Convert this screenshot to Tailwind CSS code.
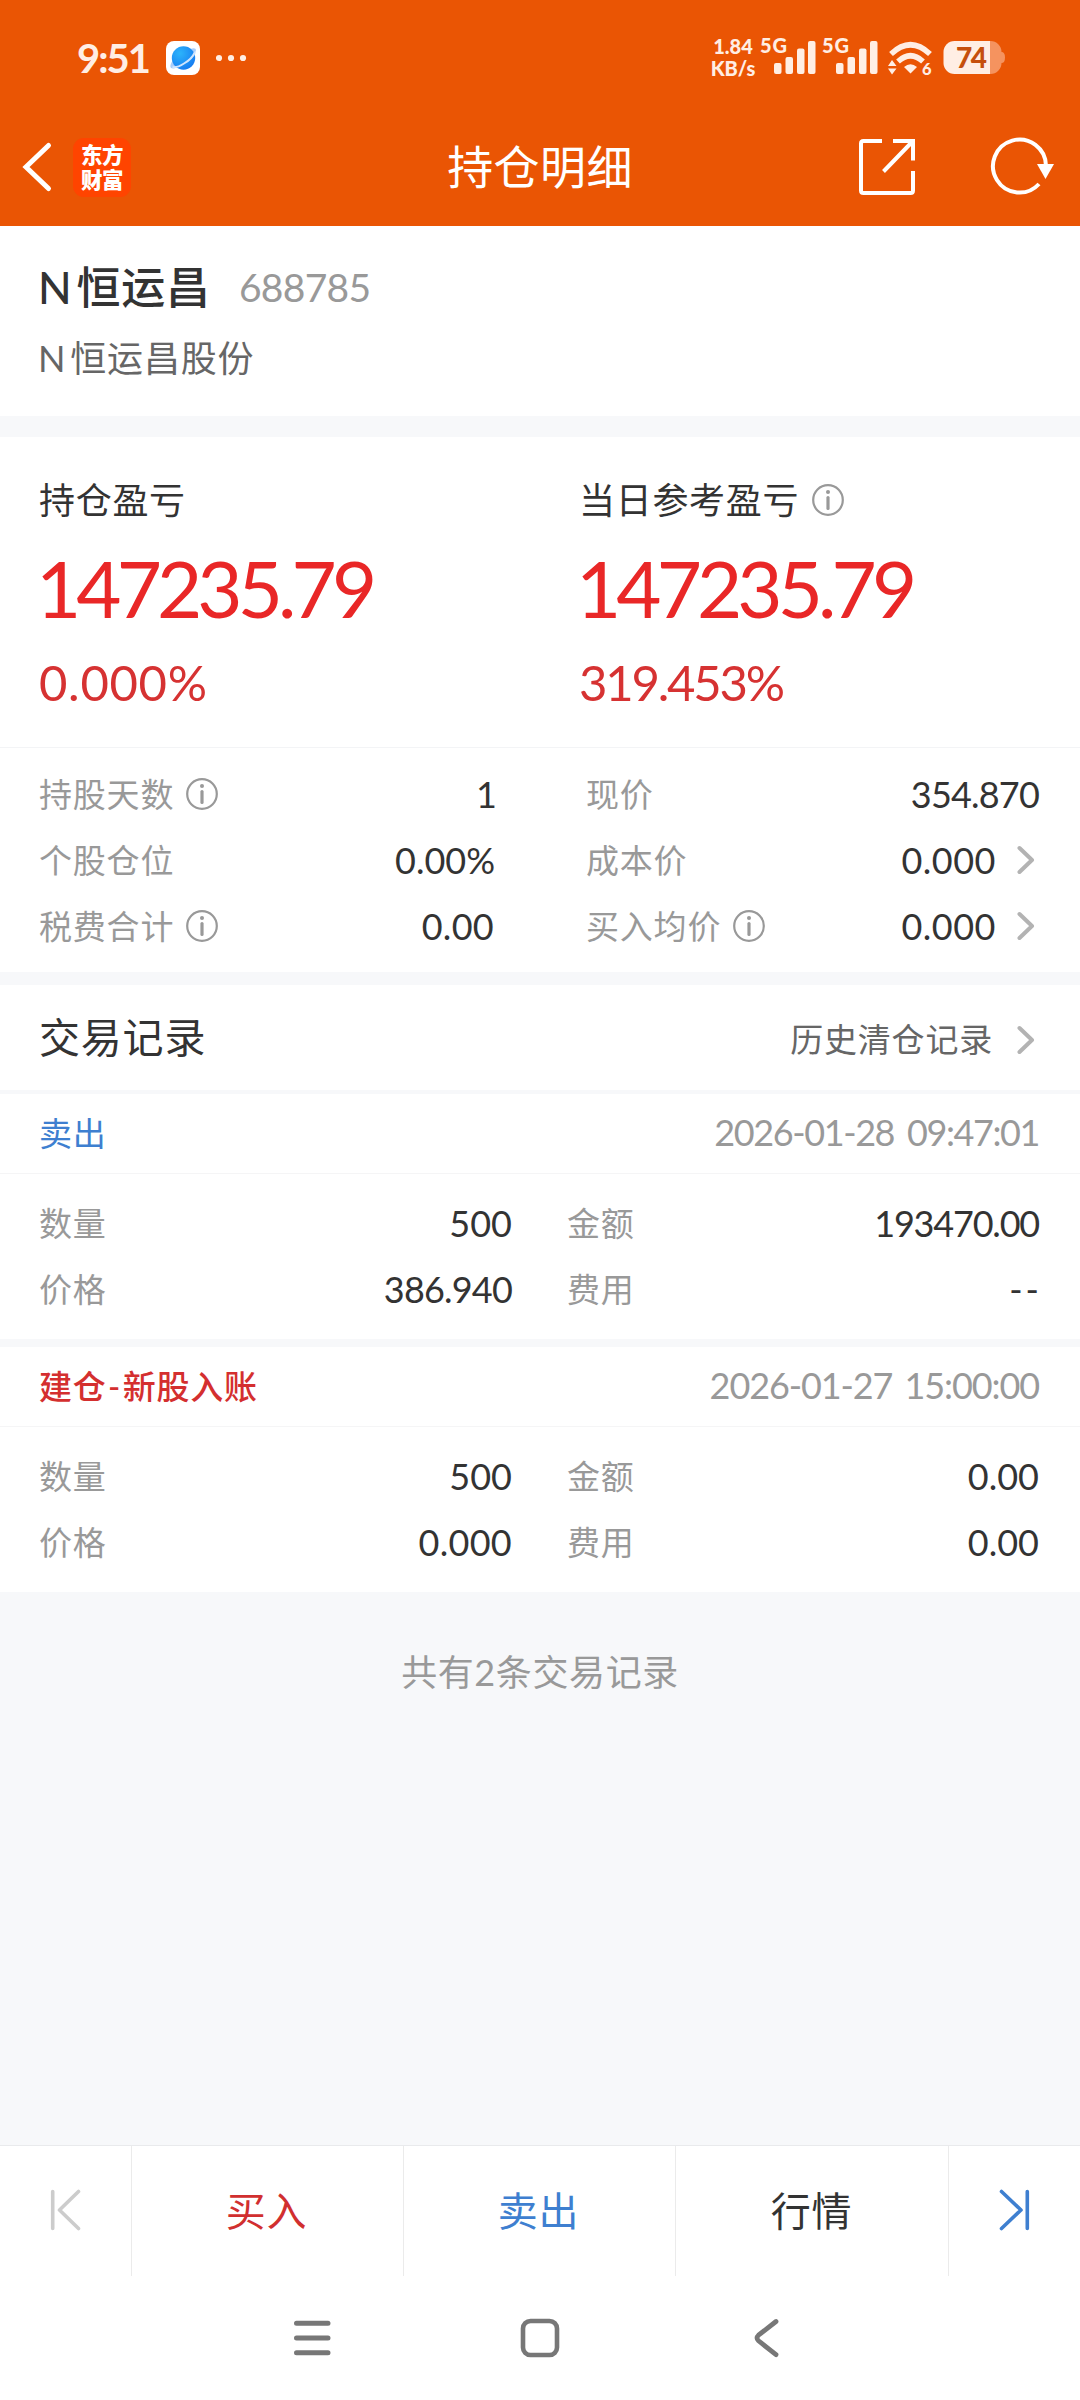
<!DOCTYPE html>
<html lang="zh-CN">
<head>
<meta charset="utf-8">
<title>持仓明细</title>
<script src="https://cdn.jsdelivr.net/npm/@tailwindcss/browser@4"></script>
</head>
<body class="bg-white">
<svg class="hidden">
  <symbol id="info" viewBox="0 0 32 32"><circle cx="16" cy="16" r="14.8" fill="none" stroke="#999" stroke-width="2.2"/><circle cx="16" cy="8" r="2" fill="#999"/><path d="M16 13.500V24.500" stroke="#999" stroke-width="3.200" stroke-linecap="round"/></symbol>
  <symbol id="chev" viewBox="0 0 18 30"><path d="M2.500 3L15 15L2.500 27" fill="none" stroke="#b3b3b3" stroke-width="4" stroke-linecap="round" stroke-linejoin="round"/></symbol>
</svg>
<div class="w-[1080px] h-[2400px] flex flex-col overflow-hidden bg-white text-[#333] leading-none whitespace-nowrap font-['Lato','Noto_Sans_CJK_SC',sans-serif]">

  <header class="h-[226px] shrink-0 bg-[#ea5504] flex flex-col">
    <div class="h-[108px] pt-[34px] pl-[77px] pr-[74px] flex items-start justify-between">
      <div class="h-12 flex items-center text-[#ffeee4]">
        <span class="w-[89px] text-[40px] font-bold tracking-[-2px]">9:51</span>
        <svg class="w-[34px] h-[34px]" viewBox="0 0 34 34">
          <defs><radialGradient id="g" cx=".35" cy=".3" r=".8"><stop offset="0" stop-color="#2cb4fb"/><stop offset="1" stop-color="#1578f0"/></radialGradient></defs>
          <rect width="34" height="34" rx="8" fill="#fff"/>
          <path d="M24 8Q30 6 30 9Q29 16 19 22Q9 29 5 27Q3 25 7 19Z" fill="#a9cdfa"/>
          <circle cx="17.500" cy="17" r="11.700" fill="url(#g)"/>
          <path d="M29 11Q26 18 18 22.500Q11 27 6.500 26" fill="none" stroke="#cfe4fd" stroke-width="2"/>
        </svg>
        <svg class="w-8 h-8 ml-4" viewBox="0 0 32 32" fill="#ffeee4"><circle cx="3" cy="16" r="3.100"/><circle cx="15" cy="16" r="3.100"/><circle cx="27" cy="16" r="3.100"/></svg>
      </div>
      <div class="h-12 flex items-center text-[#ffeee4] font-bold">
        <div class="w-[50px] pr-1 pb-[3px] text-[20px] leading-[22px] text-center font-black">1.84<br>KB/s</div>
        <svg class="w-[62px] h-11 font-black overflow-visible" viewBox="760 36 62 44" fill="#ffeee4"><text x="760" y="53" font-size="20" textLength="27">5G</text><rect x="774" y="63" width="7.500" height="11" rx="2"/><rect x="785.500" y="57" width="7.500" height="17" rx="2"/><rect x="797" y="48.500" width="7.500" height="25.500" rx="2"/><rect x="808" y="41" width="7.500" height="33" rx="2"/></svg>
        <svg class="w-[62px] h-11 font-black overflow-visible" viewBox="760 36 62 44" fill="#ffeee4"><text x="760" y="53" font-size="20" textLength="27">5G</text><rect x="774" y="63" width="7.500" height="11" rx="2"/><rect x="785.500" y="57" width="7.500" height="17" rx="2"/><rect x="797" y="48.500" width="7.500" height="25.500" rx="2"/><rect x="808" y="41" width="7.500" height="33" rx="2"/></svg>
        <svg class="w-[59px] h-10" viewBox="884 38 59 40" fill="none" stroke="#ffeee4">
          <path d="M891 54Q910.500 35.500 930 54" stroke-width="5.500"/>
          <path d="M898 61.500Q910.500 50 923 61.500" stroke-width="5.500"/>
          <path d="M904 67Q910.500 61.500 917 67L910.500 73.500Z" fill="#ffeee4" stroke="none"/>
          <path d="M888 66L892 60L896.500 66ZM888 68.500L892 74.500L896.500 68.500Z" fill="#ffeee4" stroke="none"/>
          <text x="922" y="74.500" font-size="16.500" class="font-black" fill="#ffeee4" stroke="none">6</text>
        </svg>
        <svg class="w-[63px] h-10" viewBox="943 38 63 40">
          <path d="M989 41H990.500A11 11 0 0 1 1001.500 52Q1005 52 1005 57.500Q1005 63 1001.500 63A11 11 0 0 1 990.500 74H989Z" fill="#f5935f"/>
          <path d="M990 41V74H954.500A11 11 0 0 1 943.500 63V52A11 11 0 0 1 954.500 41Z" fill="#ffeee4"/>
          <text x="956" y="68" font-size="28" textLength="31" class="font-black" fill="#c54f0c">74</text>
        </svg>
      </div>
    </div>
    <div class="h-[118px] flex items-center pl-[21px] pr-[24px] text-white">
      <svg class="w-8 h-[52px]" viewBox="0 0 32 52"><path d="M27.500 4.500L5 26L27.500 47.500" fill="none" stroke="#fff" stroke-width="5" stroke-linecap="round"/></svg>
      <div class="ml-[20px] w-[58px] h-[59px] rounded-[11px] bg-[#ff4400] text-[21.500px] leading-[25px] font-black text-center pt-[3px] tracking-[-0.5px] font-['Noto_Sans_CJK_SC',sans-serif]">东方<br>财富</div>
      <h1 class="flex-1 text-center text-[46px] pl-[102px] font-normal tracking-[0.4px]">持仓明细</h1>
      <svg class="w-[60px] h-[60px] mr-[73px] ml-[10px]" viewBox="858 137 60 60" fill="none" stroke="#fff" stroke-width="4"><path d="M883 141H864.500Q862 141 862 143.500V190.500Q862 193 864.500 193H911.500Q914 193 914 190.500V171M894 141H914V160.500M884.500 171.500L913 142"/></svg>
      <svg class="w-[66px] h-[60px]" viewBox="990 137 66 60"><path d="M1046 166A26.500 26.500 0 1 0 1039 184" fill="none" stroke="#fff" stroke-width="4"/><path d="M1037 164H1054L1045.500 179Z" fill="#fff"/></svg>
    </div>
  </header>

  <section class="h-[190px] shrink-0 pl-[38px] pt-[35px]">
    <div class="flex items-center h-[52px]"><span class="text-[44px] font-medium tracking-[0.8px]"><span class="mr-[4px]">N</span>恒运昌</span><span class="ml-[28px] text-[39px] text-[#999] tracking-[-0.7px]">688785</span></div>
    <div class="mt-[25px] h-10 flex items-center text-[36px] text-[#666] tracking-[0.8px]"><span class="mr-[4px]">N</span>恒运昌股份</div>
  </section>
  <div class="h-[21px] shrink-0 bg-[#f7f8fa]"></div>

  <section class="h-[310px] shrink-0 grid grid-cols-2 pt-[43px]">
    <div class="pl-[39px]">
      <div class="h-10 flex items-center text-[36px] tracking-[0.7px]">持仓盈亏</div>
      <div class="mt-[30px] -ml-[3px] h-[76px] flex items-center text-[78px] tracking-[-4.900px] text-[#e92727]">147235.79</div>
      <div class="mt-[31px] h-[50px] flex items-center text-[49px] text-[#d63232] tracking-[0.7px]">0.000%</div>
    </div>
    <div class="pl-[39px]">
      <div class="h-10 flex items-center text-[36px] tracking-[0.7px]">当日参考盈亏<svg class="w-8 h-8 ml-[13px]"><use href="#info"/></svg></div>
      <div class="mt-[30px] -ml-[3px] h-[76px] flex items-center text-[78px] tracking-[-4.900px] text-[#e92727]">147235.79</div>
      <div class="mt-[31px] h-[50px] flex items-center text-[49px] text-[#d63232] tracking-[-2.200px]">319.453%</div>
    </div>
  </section>
  <div class="h-px shrink-0 bg-[#f3f4f6]"></div>

  <section class="h-[224px] shrink-0 py-[13px] pl-[39px] pr-[41px] grid grid-cols-[455px_453px] gap-x-[92px] auto-rows-[66px] text-[36px]">
    <div class="flex items-center"><span class="text-[33px] text-[#999] tracking-[0.8px]">持股天数</span><svg class="w-8 h-8 ml-[12px]"><use href="#info"/></svg><span class="ml-auto -mr-[3px]">1</span></div>
    <div class="flex items-center"><span class="text-[33px] text-[#999] tracking-[0.8px]">现价</span><span class="ml-auto tracking-[-0.8px]">354.870</span></div>
    <div class="flex items-center"><span class="text-[33px] text-[#999] tracking-[0.8px]">个股仓位</span><span class="ml-auto -mr-px">0.00%</span></div>
    <div class="flex items-center"><span class="text-[33px] text-[#999] tracking-[0.8px]">成本价</span><span class="ml-auto tracking-[0.500px]">0.000</span><svg class="w-[18px] h-[30px] ml-[21px] mr-[4px]"><use href="#chev"/></svg></div>
    <div class="flex items-center"><span class="text-[33px] text-[#999] tracking-[0.8px]">税费合计</span><svg class="w-8 h-8 ml-[12px]"><use href="#info"/></svg><span class="ml-auto tracking-[0.300px]">0.00</span></div>
    <div class="flex items-center"><span class="text-[33px] text-[#999] tracking-[0.8px]">买入均价</span><svg class="w-8 h-8 ml-[12px]"><use href="#info"/></svg><span class="ml-auto tracking-[0.500px]">0.000</span><svg class="w-[18px] h-[30px] ml-[21px] mr-[4px]"><use href="#chev"/></svg></div>
  </section>
  <div class="h-[13px] shrink-0 bg-[#f7f8fa]"></div>

  <section class="h-[105px] shrink-0 pl-[39px] pr-[45px] flex items-center">
    <h2 class="text-[41px] tracking-[0.8px] font-normal">交易记录</h2>
    <div class="ml-auto flex items-center text-[33px] text-[#666] tracking-[0.8px] pt-1">历史清仓记录<svg class="w-[18px] h-[30px] ml-[24px]"><use href="#chev"/></svg></div>
  </section>
  <div class="h-1 shrink-0 bg-[#f7f8fa]"></div>

  <section class="h-[245px] shrink-0">
    <div class="h-[80px] border-b border-[#f5f5f6] pl-[39px] pr-[41px] flex items-center justify-between text-[33px]"><span class="text-[#3e7fd0] tracking-[0.8px]">卖出</span><span class="text-[36px] pb-[3px] text-[#999] tracking-[-1.400px] [word-spacing:5px]">2026-01-28 09:47:01</span></div>
    <div class="pt-4 pl-[39px] pr-[41px] grid grid-cols-[473px_472px] gap-x-[55px] auto-rows-[66px] text-[36px]">
      <div class="flex items-center justify-between"><span class="text-[33px] text-[#999] tracking-[0.8px]">数量</span><span>500</span></div>
      <div class="flex items-center justify-between"><span class="text-[33px] text-[#999] tracking-[0.8px]">金额</span><span class="tracking-[-1.200px]">193470.00</span></div>
      <div class="flex items-center justify-between"><span class="text-[33px] text-[#999] tracking-[0.8px]">价格</span><span class="tracking-[-0.800px]">386.940</span></div>
      <div class="flex items-center justify-between"><span class="text-[33px] text-[#999] tracking-[0.8px]">费用</span><span class="tracking-[3px] -mr-[3px]">--</span></div>
    </div>
  </section>
  <div class="h-2 shrink-0 bg-[#f7f8fa]"></div>
  <section class="h-[245px] shrink-0">
    <div class="h-[80px] border-b border-[#f5f5f6] pl-[39px] pr-[41px] flex items-center justify-between text-[33px]"><span class="text-[#d42f2f] tracking-[0.8px] font-medium">建仓<span class="mx-[1.500px]">-</span>新股入账</span><span class="text-[36px] pb-[3px] text-[#999] tracking-[-1.100px] [word-spacing:4px]">2026-01-27 15:00:00</span></div>
    <div class="pt-4 pl-[39px] pr-[41px] grid grid-cols-[473px_472px] gap-x-[55px] auto-rows-[66px] text-[36px]">
      <div class="flex items-center justify-between"><span class="text-[33px] text-[#999] tracking-[0.8px]">数量</span><span>500</span></div>
      <div class="flex items-center justify-between"><span class="text-[33px] text-[#999] tracking-[0.8px]">金额</span><span>0.00</span></div>
      <div class="flex items-center justify-between"><span class="text-[33px] text-[#999] tracking-[0.8px]">价格</span><span class="tracking-[0.300px]">0.000</span></div>
      <div class="flex items-center justify-between"><span class="text-[33px] text-[#999] tracking-[0.8px]">费用</span><span>0.00</span></div>
    </div>
  </section>

  <main class="flex-1 bg-[#f7f8fa] pt-[60px] text-center text-[#999] text-[36px] leading-10 tracking-[0.600px]">共有2条交易记录</main>

  <nav class="h-[131px] shrink-0 border-t border-[#e9eaec] grid grid-cols-[132px_272px_272px_273px_131px] text-[40px] tracking-[0.8px]">
    <div class="border-r border-[#ebebeb] flex items-center"><svg class="w-8 h-[42px] ml-[50px] -mt-[2px]" viewBox="50 2188.500 32 42" fill="none" stroke="#ccc" stroke-width="3.600" stroke-linecap="round" stroke-linejoin="round"><path d="M52.700 2191V2228M78.500 2191L59.500 2209.500L78.500 2228"/></svg></div>
    <div class="border-r border-[#ebebeb] flex items-center justify-center pr-[2px] text-[#d12f2f]">买入</div>
    <div class="border-r border-[#ebebeb] flex items-center justify-center pr-[2px] text-[#3e7fd0]">卖出</div>
    <div class="border-r border-[#ebebeb] flex items-center justify-center pr-px">行情</div>
    <div class="flex items-center"><svg class="w-8 h-[42px] ml-[49px] -mt-[2px]" viewBox="998 2188.500 32 42" fill="none" stroke="#3e7fd0" stroke-width="3.600" stroke-linecap="round" stroke-linejoin="round"><path d="M1027.300 2191V2228M1001.500 2191L1021 2209.500L1001.500 2228"/></svg></div>
  </nav>
  <footer class="h-[124px] shrink-0 flex items-center pl-[292px]">
    <svg class="w-10 h-10" viewBox="292 2318 40 40" stroke="#777" stroke-width="5" stroke-linecap="round"><path d="M296.500 2323.300H328M296.500 2338H328M296.500 2352.700H328"/></svg>
    <svg class="w-10 h-10 ml-[188px]" viewBox="520 2318 40 40"><rect x="523" y="2321" width="34" height="34" rx="7.500" fill="none" stroke="#777" stroke-width="4.600"/></svg>
    <svg class="w-8 h-11 ml-[190px]" viewBox="750 2316 32 44"><path d="M776 2321.500L758.500 2335.200Q755.500 2338 758.500 2340.800L776 2354.700" fill="none" stroke="#777" stroke-width="4.800" stroke-linecap="round"/></svg>
  </footer>
</div>
</body>
</html>
